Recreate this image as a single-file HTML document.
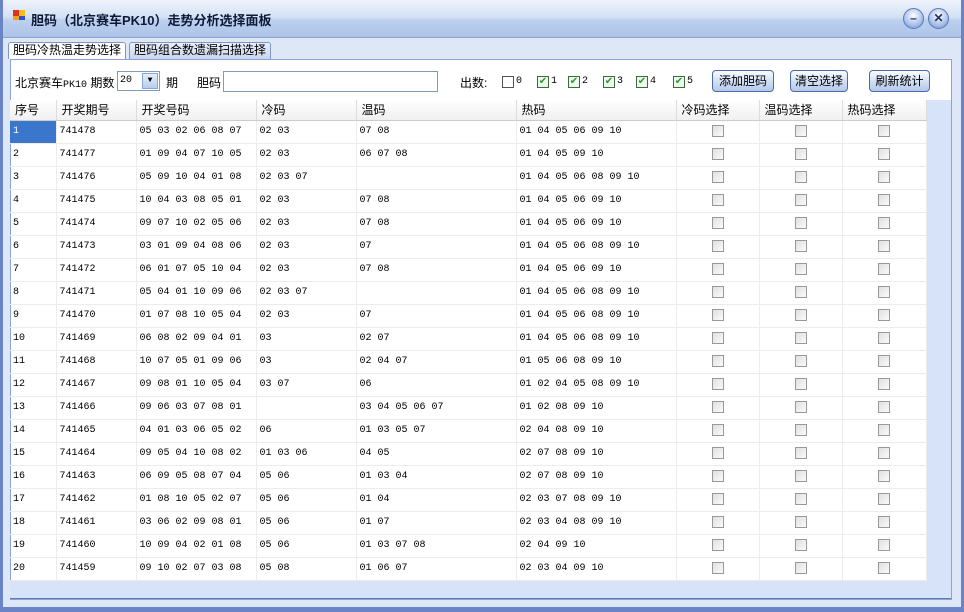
<!DOCTYPE html>
<html><head><meta charset="utf-8"><style>
*{margin:0;padding:0;box-sizing:border-box}
body{width:964px;height:612px;overflow:hidden;background:#6b84c8;font-family:"Liberation Sans","Noto Sans CJK SC","WenQuanYi Zen Hei",sans-serif;font-size:12px;color:#000;position:relative}
.win{position:absolute;left:3px;top:0;width:958px;height:607px;background:#dde7f6}
.title{position:absolute;left:0;top:0;width:958px;height:38px;background:linear-gradient(#eef3fb,#d5e2f4 45%,#bcd0ee 55%,#adc4e8);border-bottom:1px solid #8aa4d6}
.title .t{position:absolute;left:28px;top:10px;font-size:13px;font-weight:bold;color:#0f1a3a}
.btn{position:absolute;top:8px;width:21px;height:21px;border-radius:50%;background:radial-gradient(circle at 50% 35%,#fff,#a9c0e8 60%,#6f8fcf);border:1px solid #5c78b8;color:#203060;font-weight:bold;text-align:center;line-height:18px;font-size:12px}
.tab{position:absolute;top:42px;height:17px;border:1px solid #7d98c8;border-bottom:none;border-radius:3px 3px 0 0;padding:0 4px;line-height:15px;font-size:12px}
.panel{position:absolute;left:7px;top:59px;width:942px;height:541px;background:#fff;border:1px solid #8aa4d6}
.lbl{position:absolute;top:74px;font-size:12px}
.m{font-family:"Liberation Mono",monospace;font-size:10px;top:76px}
.cb{position:absolute;top:76px;width:12px;height:12px;border:1px solid #3d6a3d;background:#eef7ee;font-size:10px;color:#2a9a2a;line-height:10px;text-align:center}
.pb{position:absolute;top:70px;height:22px;border:1px solid #4a6aa8;border-radius:4px;background:linear-gradient(#fafcff,#d3e0f4 50%,#b3c8ea);text-align:center;line-height:20px;font-size:12px}
.grid{position:absolute;left:10px;top:100px;width:916px;border-collapse:collapse;table-layout:fixed}
.grid td{height:23px;padding-left:3px;border-right:1px solid #ececec;border-bottom:1px solid #ececec;white-space:nowrap;overflow:hidden;font-family:"Liberation Mono","Noto Sans CJK SC",monospace;font-size:10px}
.grid tr.h td{height:20px;background:linear-gradient(#fff,#f0f0f0);border-right:1px solid #ddd;border-bottom:1px solid #ccc;font-family:"Liberation Sans","Noto Sans CJK SC",sans-serif;font-size:12px;padding-left:5px}
.grid td.c{text-align:center;padding:0}
.grid td.c span{display:inline-block;width:12px;height:12px;border:1px solid #999;background:linear-gradient(135deg,#e0e0e0,#fafafa);vertical-align:middle}
.grid td.sel{background:#3a77cc;color:#fff}
</style></head><body>
<div class="win">
<div class="title">
<div style="position:absolute;left:10px;top:10px;width:6px;height:6px;background:#e03020"></div>
<div style="position:absolute;left:16px;top:10px;width:6px;height:6px;background:#f0c020"></div>
<div style="position:absolute;left:10px;top:16px;width:6px;height:4px;background:#f0a020"></div>
<div style="position:absolute;left:16px;top:16px;width:6px;height:4px;background:#3050d0"></div>
<div class="t">胆码（北京赛车PK10）走势分析选择面板</div>
<div class="btn" style="left:900px">–</div><div class="btn" style="left:925px">✕</div>
</div>
<div class="tab" style="left:5px;background:#fff;">胆码冷热温走势选择</div>
<div class="tab" style="left:126px;background:linear-gradient(#eaf0fa,#c8d6ee);">胆码组合数遗漏扫描选择</div>
<div class="panel"></div>
</div>
<div class="lbl" style="left:15px">北京赛车<span style="font-family:'Liberation Mono';font-size:10px">PK10</span> 期数</div>
<div style="position:absolute;left:117px;top:71px;width:43px;height:20px;border:1px solid #7f9db9;background:#fff;font-family:'Liberation Mono';font-size:10px;padding-left:2px;line-height:18px">20<span style="position:absolute;right:1px;top:1px;width:16px;height:16px;background:linear-gradient(#e6eefc,#b9ccee);border:1px solid #8aa4d6;font-size:8px;text-align:center;line-height:14px">▼</span></div>
<div class="lbl" style="left:166px">期</div>
<div class="lbl" style="left:197px">胆码</div>
<div style="position:absolute;left:223px;top:71px;width:215px;height:21px;border:1px solid #7f9db9;background:#fff"></div>
<div class="lbl" style="left:460px">出数:</div>
<div class="cb" style="left:502px;border-color:#555;background:#fff"></div><div class="lbl m" style="left:516px">0</div>
<div class="cb" style="left:537px">✔</div><div class="lbl m" style="left:551px">1</div>
<div class="cb" style="left:568px">✔</div><div class="lbl m" style="left:582px">2</div>
<div class="cb" style="left:603px">✔</div><div class="lbl m" style="left:617px">3</div>
<div class="cb" style="left:636px">✔</div><div class="lbl m" style="left:650px">4</div>
<div class="cb" style="left:673px">✔</div><div class="lbl m" style="left:687px">5</div>
<div class="pb" style="left:712px;width:62px">添加胆码</div>
<div class="pb" style="left:790px;width:58px">清空选择</div>
<div class="pb" style="left:869px;width:61px">刷新统计</div>
<div style="position:absolute;left:926px;top:100px;width:25px;height:480px;background:#d6e3f8"></div>
<div style="position:absolute;left:10px;top:580px;width:941px;height:19px;background:#d6e3f8;border-bottom:1px solid #5a7fa8"></div>
<table class="grid">
<colgroup><col style="width:46px"><col style="width:80px"><col style="width:120px"><col style="width:100px"><col style="width:160px"><col style="width:160px"><col style="width:83px"><col style="width:83px"><col style="width:84px"></colgroup>
<tr class="h"><td>序号</td><td>开奖期号</td><td>开奖号码</td><td>冷码</td><td>温码</td><td>热码</td><td>冷码选择</td><td>温码选择</td><td>热码选择</td></tr>
<tr><td class="sel">1</td><td>741478</td><td>05 03 02 06 08 07</td><td>02 03</td><td>07 08</td><td>01 04 05 06 09 10</td><td class="c"><span></span></td><td class="c"><span></span></td><td class="c"><span></span></td></tr>
<tr><td>2</td><td>741477</td><td>01 09 04 07 10 05</td><td>02 03</td><td>06 07 08</td><td>01 04 05 09 10</td><td class="c"><span></span></td><td class="c"><span></span></td><td class="c"><span></span></td></tr>
<tr><td>3</td><td>741476</td><td>05 09 10 04 01 08</td><td>02 03 07</td><td></td><td>01 04 05 06 08 09 10</td><td class="c"><span></span></td><td class="c"><span></span></td><td class="c"><span></span></td></tr>
<tr><td>4</td><td>741475</td><td>10 04 03 08 05 01</td><td>02 03</td><td>07 08</td><td>01 04 05 06 09 10</td><td class="c"><span></span></td><td class="c"><span></span></td><td class="c"><span></span></td></tr>
<tr><td>5</td><td>741474</td><td>09 07 10 02 05 06</td><td>02 03</td><td>07 08</td><td>01 04 05 06 09 10</td><td class="c"><span></span></td><td class="c"><span></span></td><td class="c"><span></span></td></tr>
<tr><td>6</td><td>741473</td><td>03 01 09 04 08 06</td><td>02 03</td><td>07</td><td>01 04 05 06 08 09 10</td><td class="c"><span></span></td><td class="c"><span></span></td><td class="c"><span></span></td></tr>
<tr><td>7</td><td>741472</td><td>06 01 07 05 10 04</td><td>02 03</td><td>07 08</td><td>01 04 05 06 09 10</td><td class="c"><span></span></td><td class="c"><span></span></td><td class="c"><span></span></td></tr>
<tr><td>8</td><td>741471</td><td>05 04 01 10 09 06</td><td>02 03 07</td><td></td><td>01 04 05 06 08 09 10</td><td class="c"><span></span></td><td class="c"><span></span></td><td class="c"><span></span></td></tr>
<tr><td>9</td><td>741470</td><td>01 07 08 10 05 04</td><td>02 03</td><td>07</td><td>01 04 05 06 08 09 10</td><td class="c"><span></span></td><td class="c"><span></span></td><td class="c"><span></span></td></tr>
<tr><td>10</td><td>741469</td><td>06 08 02 09 04 01</td><td>03</td><td>02 07</td><td>01 04 05 06 08 09 10</td><td class="c"><span></span></td><td class="c"><span></span></td><td class="c"><span></span></td></tr>
<tr><td>11</td><td>741468</td><td>10 07 05 01 09 06</td><td>03</td><td>02 04 07</td><td>01 05 06 08 09 10</td><td class="c"><span></span></td><td class="c"><span></span></td><td class="c"><span></span></td></tr>
<tr><td>12</td><td>741467</td><td>09 08 01 10 05 04</td><td>03 07</td><td>06</td><td>01 02 04 05 08 09 10</td><td class="c"><span></span></td><td class="c"><span></span></td><td class="c"><span></span></td></tr>
<tr><td>13</td><td>741466</td><td>09 06 03 07 08 01</td><td></td><td>03 04 05 06 07</td><td>01 02 08 09 10</td><td class="c"><span></span></td><td class="c"><span></span></td><td class="c"><span></span></td></tr>
<tr><td>14</td><td>741465</td><td>04 01 03 06 05 02</td><td>06</td><td>01 03 05 07</td><td>02 04 08 09 10</td><td class="c"><span></span></td><td class="c"><span></span></td><td class="c"><span></span></td></tr>
<tr><td>15</td><td>741464</td><td>09 05 04 10 08 02</td><td>01 03 06</td><td>04 05</td><td>02 07 08 09 10</td><td class="c"><span></span></td><td class="c"><span></span></td><td class="c"><span></span></td></tr>
<tr><td>16</td><td>741463</td><td>06 09 05 08 07 04</td><td>05 06</td><td>01 03 04</td><td>02 07 08 09 10</td><td class="c"><span></span></td><td class="c"><span></span></td><td class="c"><span></span></td></tr>
<tr><td>17</td><td>741462</td><td>01 08 10 05 02 07</td><td>05 06</td><td>01 04</td><td>02 03 07 08 09 10</td><td class="c"><span></span></td><td class="c"><span></span></td><td class="c"><span></span></td></tr>
<tr><td>18</td><td>741461</td><td>03 06 02 09 08 01</td><td>05 06</td><td>01 07</td><td>02 03 04 08 09 10</td><td class="c"><span></span></td><td class="c"><span></span></td><td class="c"><span></span></td></tr>
<tr><td>19</td><td>741460</td><td>10 09 04 02 01 08</td><td>05 06</td><td>01 03 07 08</td><td>02 04 09 10</td><td class="c"><span></span></td><td class="c"><span></span></td><td class="c"><span></span></td></tr>
<tr><td>20</td><td>741459</td><td>09 10 02 07 03 08</td><td>05 08</td><td>01 06 07</td><td>02 03 04 09 10</td><td class="c"><span></span></td><td class="c"><span></span></td><td class="c"><span></span></td></tr>
</table>
</body></html>
